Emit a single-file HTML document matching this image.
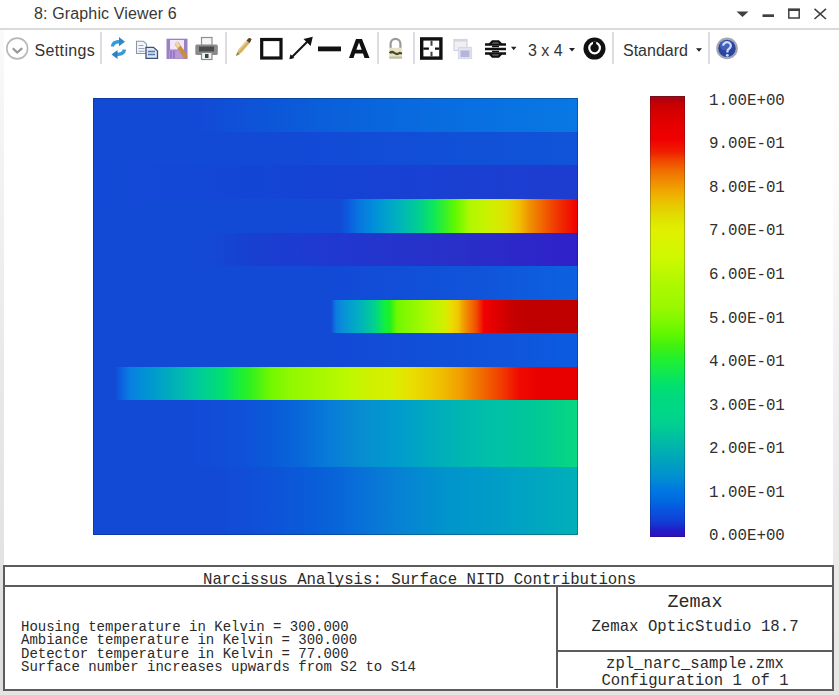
<!DOCTYPE html>
<html><head><meta charset="utf-8">
<style>
html,body{margin:0;padding:0;}
body{width:839px;height:695px;position:relative;overflow:hidden;background:#ffffff;font-family:"Liberation Sans",sans-serif;}
.abs{position:absolute;}
.title{position:absolute;left:34px;top:5.3px;font-size:16px;color:#383838;white-space:nowrap;letter-spacing:0.14px;}
.hsep{position:absolute;left:0;top:28px;width:839px;height:2px;background:#dadada;}
.vsep{position:absolute;top:32px;width:1.5px;height:32px;background:#dcdce2;}
.tbtxt{position:absolute;top:41.7px;font-size:16px;color:#333;white-space:nowrap;}
.plot{position:absolute;left:93px;top:98px;width:485px;height:437px;overflow:hidden;}
.row{position:absolute;left:0;width:485px;}
.cbar{position:absolute;left:650px;top:96.3px;width:34.7px;height:440.4px;background:linear-gradient(to top,#3010c0 0.3%,#2020c8 1.7%,#1040d8 3.7%,#0858e0 6.6%,#0068e0 8.0%,#0078e0 10.7%,#0090d0 13.7%,#00a0c0 16.7%,#00b0b0 19.6%,#00c0a0 22.6%,#00d090 25.6%,#00d888 28.5%,#00d880 31.3%,#00e070 34.2%,#10e850 37.2%,#20f030 40.2%,#40f010 43.2%,#60f800 46.1%,#80f800 49.1%,#98f800 51.8%,#b0f800 57.8%,#d0f800 63.7%,#e0f000 69.6%,#e0e000 72.4%,#e8c800 75.3%,#f0a800 78.3%,#f09000 80.4%,#f07000 82.9%,#f04000 85.8%,#f02000 87.2%,#f00000 90.2%,#e80000 93.0%,#d80000 95.9%,#c80000 98.1%,#b00010 99.3%,#981010 100.0%);}
.lab{position:absolute;left:709px;font-family:"Liberation Mono",monospace;font-size:15.8px;color:#303030;white-space:nowrap;line-height:16px;}
.box{position:absolute;left:3px;top:565px;width:827px;height:122px;border:2px solid #5c5c5c;background:#fff;}
.mono{font-family:"Liberation Mono",monospace;color:#2a2a2a;white-space:nowrap;position:absolute;}
</style></head><body>
<!-- side strips -->
<div class="abs" style="left:0;top:30px;width:4px;height:665px;background:linear-gradient(#fafafa,#f4f4f4 15%,#e6e8e8 55%,#dedede)"></div>
<div class="abs" style="left:833px;top:30px;width:6px;height:665px;background:linear-gradient(#fefefe,#fbfbfb 25%,#f3f3f5 45%,#ececee 70%,#e6e6e6)"></div>
<div class="abs" style="left:0;top:690px;width:839px;height:5px;background:#e4e4e4"></div>

<!-- title bar -->
<div class="title">8: Graphic Viewer 6</div>
<svg class="abs" style="left:730px;top:0" width="109" height="28" viewBox="730 0 109 28">
  <path d="M736.5 11.5 L748.5 11.5 L742.5 17 Z" fill="#404040"/>
  <rect x="762.5" y="14.3" width="11.5" height="2.7" fill="#404040"/>
  <rect x="788.8" y="9.4" width="10.4" height="8.6" fill="none" stroke="#404040" stroke-width="1.5"/>
  <rect x="788" y="8.6" width="12" height="2.4" fill="#404040"/>
  <path d="M814.5 8.8 L826 19 M826 8.8 L814.5 19" stroke="#404040" stroke-width="1.6"/>
</svg>
<div class="hsep"></div>

<!-- toolbar -->
<svg class="abs" style="left:0;top:30px" width="839" height="40" viewBox="0 30 839 40">
  <!-- settings circle -->
  <circle cx="17.2" cy="48.5" r="10.4" fill="none" stroke="#b8b8b8" stroke-width="1.6"/>
  <path d="M12.8 48.2 L17.2 52.6 L22.2 48.2" fill="none" stroke="#989898" stroke-width="2.2"/>
</svg>
<div class="tbtxt" style="left:34.5px;letter-spacing:0.36px">Settings</div>
<div class="vsep" style="left:100px"></div>
<div class="vsep" style="left:225px"></div>
<div class="vsep" style="left:377px"></div>
<div class="vsep" style="left:413px"></div>
<div class="vsep" style="left:612px"></div>
<div class="vsep" style="left:708px"></div>
<div class="tbtxt" style="left:528px">3 x 4</div>
<div class="tbtxt" style="left:623px">Standard</div>
<svg class="abs" style="left:0;top:30px" width="839" height="40" viewBox="0 30 839 40">
  <!-- refresh -->
  <path d="M112.3 46.5 Q113 41.5 120.5 41.5" fill="none" stroke="#3a9ad6" stroke-width="3.4"/>
  <path d="M119 37 L125 41.7 L119 46.2 Z" fill="#2f88c8"/>
  <path d="M124.5 49.5 Q123.8 54.5 116 54.5" fill="none" stroke="#3a9ad6" stroke-width="3.4"/>
  <path d="M117.5 50 L111.5 54.5 L117.5 59 Z" fill="#2f80c0"/>
  <!-- copy -->
  <path d="M136.5 41.2 H143.5 L146.5 44.2 V53.5 H136.5 Z" fill="#f2f4f8" stroke="#8c96a8" stroke-width="1.1"/>
  <path d="M138.5 45.5h5M138.5 48.5h6M138.5 51.2h6" stroke="#9aa4b8" stroke-width="1.1"/>
  <path d="M146 47.3 H153.5 L157.5 51 V58.3 H146 Z" fill="#dde6f2" stroke="#3c5078" stroke-width="1.3"/>
  <path d="M148 51.5h7M148 54.5h7" stroke="#5a78a8" stroke-width="1.3"/>
  <!-- save -->
  <rect x="166.5" y="38.7" width="21" height="20.3" fill="#9c80c4"/>
  <rect x="170" y="40" width="14" height="9.5" fill="#f4e6fa"/>
  <rect x="169" y="50.5" width="15.5" height="8" fill="#b89ad8"/>
  <path d="M171 51v7M174 51v7" stroke="#8a66b8" stroke-width="1.3"/>
  <path d="M176.5 43 L186 57.5" stroke="#c8903c" stroke-width="4.2"/>
  <path d="M176 42 L179 47" stroke="#e8d8b0" stroke-width="3.5"/>
  <!-- printer -->
  <rect x="201.5" y="37.5" width="10.5" height="8" fill="#f6f6f6" stroke="#909090" stroke-width="1.2"/>
  <rect x="195.3" y="44.5" width="22.5" height="10.5" rx="1.5" fill="#8a8a8a"/>
  <rect x="199" y="46.5" width="15" height="5" fill="#4a4a4a"/>
  <rect x="201.5" y="52.5" width="10.5" height="7" fill="#f2f4f4" stroke="#8a8a8a" stroke-width="1.2"/>
  <rect x="205" y="54" width="3.5" height="4" fill="#304848"/>
  <!-- pencil -->
  <path d="M236 56 L238.5 49.5 L246.5 40.5 L249.5 43.2 L241.5 52.5 Z" fill="#d8b060"/>
  <path d="M238.5 50.5 L246.8 41.2" stroke="#ecd090" stroke-width="1.3"/>
  <path d="M246.5 40.5 L248.5 38.3 Q250.5 37.5 251.3 39.3 Q251.3 40.8 249.5 43.2 Z" fill="#5a4030"/>
  <path d="M236 56 L237.3 52 L239.8 54.3 Z" fill="#8a8a6a"/>
  <!-- rectangle -->
  <rect x="261.7" y="39.5" width="19.3" height="18.5" fill="none" stroke="#111" stroke-width="3.2"/>
  <!-- arrow -->
  <path d="M291 58 L309 40" stroke="#111" stroke-width="2"/>
  <path d="M312.8 36.8 L303.5 39 L310.6 46 Z" fill="#111"/>
  <path d="M289.3 59.3 L290.5 54.3 L294.3 58.1 Z" fill="#111"/>
  <!-- line -->
  <rect x="318" y="46.5" width="23" height="4.8" fill="#111"/>
  <!-- A -->
  <path d="M349 58 L356 39 L362 39 L369.5 58 L364.5 58 L363 53.5 L355 53.5 L353.5 58 Z M356.3 49.8 L361.7 49.8 L359 42.5 Z" fill="#111" fill-rule="evenodd"/>
  <!-- lock -->
  <path d="M390.6 48 L390.6 43.8 A4.9 5 0 0 1 400.4 43.8 L400.4 48" fill="none" stroke="#9a9a9a" stroke-width="2.2"/>
  <rect x="389.3" y="47.8" width="12.8" height="10.8" fill="#e6e2c6"/>
  <path d="M389.5 53 Q392 51 394.5 53 T399.5 53 L402 53.5" fill="none" stroke="#4a4a2a" stroke-width="2.2"/>
  <rect x="389.3" y="56.5" width="12.8" height="2.1" fill="#c0bca0"/>
  <!-- grid -->
  <rect x="421.7" y="38.9" width="19.2" height="19.2" fill="#fff" stroke="#111" stroke-width="3.4"/>
  <path d="M431.5 40.5 V45.8 M431.5 51.7 V56.5" stroke="#444" stroke-width="2"/>
  <path d="M423.3 48.7 H428.9 M435 48.7 H439.3" stroke="#111" stroke-width="2.2"/>
  <!-- windows -->
  <rect x="454" y="39.5" width="13" height="11" fill="#f0f0f4" stroke="#d0d2da" stroke-width="1.2"/>
  <rect x="454" y="39" width="13" height="2.5" fill="#d4d6de"/>
  <rect x="458.5" y="47.5" width="13" height="11" fill="#e4e4f0" stroke="#d8d8e8" stroke-width="1.2"/>
  <rect x="460.5" y="50.5" width="9" height="6.5" fill="#b4b4dc"/>
  <!-- layers -->
  <path d="M489.5 44.5 L492.5 41.5 H498.5 L501.5 44.5 M489.5 53.5 L492.5 56.5 H498.5 L501.5 53.5" fill="none" stroke="#111" stroke-width="2.4"/>
  <path d="M485 44.6 H506 M485 49 H506 M485 53.4 H506" stroke="#111" stroke-width="2.5"/>
  <path d="M492 46.5 H499 M492 51.5 H499" stroke="#111" stroke-width="1.6"/>
  <path d="M511 46.7 L516.5 46.7 L513.7 50.3 Z" fill="#222"/>
  <!-- 3x4 triangle -->
  <path d="M569 47.9 L575 47.9 L572 51.4 Z" fill="#222"/>
  <!-- black circle -->
  <circle cx="594.5" cy="48.6" r="11" fill="#111"/>
  <circle cx="594.6" cy="48" r="5.3" fill="none" stroke="#fff" stroke-width="2.2"/>
  <rect x="593" y="41.5" width="3.2" height="7" fill="#111"/>
  <circle cx="594.6" cy="49" r="2.2" fill="#111"/>
  <!-- standard triangle -->
  <path d="M696 48.3 L702 48.3 L699 51.7 Z" fill="#222"/>
  <!-- help -->
  <circle cx="727" cy="48.4" r="10.8" fill="#a4a8b4"/>
  <circle cx="727" cy="48.4" r="8.7" fill="#2a44a0"/>
  <circle cx="725" cy="45.5" r="5" fill="#4c6cc8" opacity="0.7"/>
  <path d="M723.2 45.8 A3.8 3.6 0 1 1 729 48.8 Q727.3 49.8 727.3 52.5" fill="none" stroke="#d0dcf8" stroke-width="2.3"/>
  <circle cx="727.3" cy="55.3" r="1.4" fill="#d0dcf8"/>
</svg>

<!-- plot -->
<div class="plot">
<div class="row" style="top:0.00px;height:34.20px;background:linear-gradient(to right,#124ad6 0.00%,#124ad6 22.06%,#0c56d8 36.49%,#0a60da 48.87%,#086ee0 73.61%,#0878e4 100.00%)"></div>
<div class="row" style="top:33.80px;height:33.60px;background:linear-gradient(to right,#124ad6 0.00%,#124ad6 42.68%,#1054d8 100.00%)"></div>
<div class="row" style="top:67.00px;height:34.60px;background:linear-gradient(to right,#124ad6 0.00%,#1444d4 42.68%,#1e3cd0 100.00%)"></div>
<div class="row" style="top:101.20px;height:34.20px;background:linear-gradient(to right,#124ad6 0.00%,#124ad6 50.93%,#0c5ade 52.58%,#0874e0 54.64%,#0090d8 58.14%,#00b0c0 62.68%,#00d090 67.22%,#10e858 70.31%,#38f028 72.58%,#60f800 74.64%,#b0f800 77.73%,#d0f000 82.27%,#e0e000 85.36%,#f0c000 87.84%,#f09000 90.10%,#f06000 92.99%,#f03000 96.08%,#f00800 99.18%,#f00000 100.00%)"></div>
<div class="row" style="top:135.00px;height:33.40px;background:linear-gradient(to right,#124ad6 0.00%,#124ad6 22.06%,#1840d0 32.37%,#2038d0 48.87%,#2830c8 73.61%,#3020c8 100.00%)"></div>
<div class="row" style="top:168.00px;height:34.00px;background:linear-gradient(to right,#124ad6 0.00%,#124ad6 50.93%,#1054da 79.79%,#0c62e0 100.00%)"></div>
<div class="row" style="top:201.60px;height:34.00px;background:linear-gradient(to right,#124ad6 0.00%,#124ad6 49.07%,#0c7ce0 50.10%,#0890d8 51.55%,#00b0c0 54.85%,#00d090 57.94%,#10f040 60.21%,#20f020 61.24%,#70f800 62.68%,#90f800 65.98%,#b0f800 69.07%,#d0f000 72.37%,#e8e000 73.61%,#f0c800 75.26%,#f0a000 76.29%,#f08000 77.32%,#f05000 78.97%,#f02000 80.00%,#f00000 80.62%,#e00000 83.09%,#c80000 86.39%,#c00000 89.48%,#c00000 100.00%)"></div>
<div class="row" style="top:235.20px;height:34.00px;background:linear-gradient(to right,#124ad6 0.00%,#124ad6 50.93%,#1052da 79.79%,#0c5ce0 100.00%)"></div>
<div class="row" style="top:268.80px;height:34.00px;background:linear-gradient(to right,#124ad6 0.00%,#124ad6 4.54%,#0c64e0 5.98%,#0880e0 7.63%,#0094d4 11.13%,#00a8c0 15.05%,#00c8a0 21.03%,#00e070 26.80%,#20f030 30.93%,#30f020 32.37%,#70f800 36.49%,#90f800 40.62%,#a0f800 44.95%,#b0f800 49.07%,#c0f800 53.20%,#d0f000 57.53%,#d8f000 61.65%,#e8e000 65.36%,#f0c000 71.55%,#f0a000 75.67%,#f07000 79.79%,#f04000 83.92%,#f00800 88.04%,#e80000 92.37%,#e80000 100.00%)"></div>
<div class="row" style="top:302.40px;height:67.00px;background:linear-gradient(to right,#124ad6 0.00%,#124ad6 20.00%,#1050d8 30.31%,#0a5ad8 36.49%,#0868d8 42.68%,#087cd8 48.87%,#088cd0 55.05%,#009ccc 62.89%,#00b0b8 72.58%,#00c0a8 81.86%,#00c898 91.13%,#08d880 100.00%)"></div>
<div class="row" style="top:369.00px;height:68.40px;background:linear-gradient(to right,#124ad6 0.00%,#124ad6 26.19%,#1050d8 34.43%,#0a5ad8 42.68%,#0862d8 48.87%,#0870d8 55.05%,#0880d4 62.27%,#0094cc 72.58%,#009cc8 81.86%,#00a6c0 91.13%,#00b0b8 100.00%)"></div>

</div>
<div class="abs" style="left:93px;top:98px;width:485px;height:437px;box-shadow:inset 0 0 0 1px rgba(10,20,50,0.3)"></div>
<div class="cbar"></div>
<div class="abs" style="left:650px;top:96.3px;width:34.7px;height:440.4px;box-shadow:inset 0 0 0 1px rgba(10,20,50,0.25)"></div>
<div class="lab" style="top:92.7px">1.00E+00</div>
<div class="lab" style="top:136.3px">9.00E-01</div>
<div class="lab" style="top:179.8px">8.00E-01</div>
<div class="lab" style="top:223.4px">7.00E-01</div>
<div class="lab" style="top:266.9px">6.00E-01</div>
<div class="lab" style="top:310.5px">5.00E-01</div>
<div class="lab" style="top:354.1px">4.00E-01</div>
<div class="lab" style="top:397.6px">3.00E-01</div>
<div class="lab" style="top:441.2px">2.00E-01</div>
<div class="lab" style="top:484.7px">1.00E-01</div>
<div class="lab" style="top:528.3px">0.00E+00</div>


<!-- info box -->
<div class="box"></div>
<div class="abs" style="left:5px;top:585.2px;width:827px;height:2px;background:#5c5c5c"></div>
<div class="abs" style="left:555.5px;top:587px;width:2px;height:101px;background:#5c5c5c"></div>
<div class="abs" style="left:557.5px;top:649.5px;width:275px;height:2px;background:#5c5c5c"></div>
<div class="mono" style="left:203px;top:570.5px;font-size:15.7px;line-height:18px">Narcissus Analysis: Surface NITD Contributions</div>
<div class="mono" style="left:21px;top:620.7px;font-size:14px;line-height:13.6px">Housing temperature in Kelvin = 300.000<br>Ambiance temperature in Kelvin = 300.000<br>Detector temperature in Kelvin = 77.000<br>Surface number increases upwards from S2 to S14</div>
<div class="mono" style="left:557px;width:276px;text-align:center;top:592.5px;font-size:18.4px;line-height:20px">Zemax</div>
<div class="mono" style="left:557px;width:276px;text-align:center;top:618px;font-size:15.7px;line-height:18px">Zemax OpticStudio 18.7</div>
<div class="mono" style="left:557px;width:276px;text-align:center;top:656.3px;font-size:15.6px;line-height:16.2px">zpl_narc_sample.zmx<br>Configuration 1 of 1</div>
</body></html>
